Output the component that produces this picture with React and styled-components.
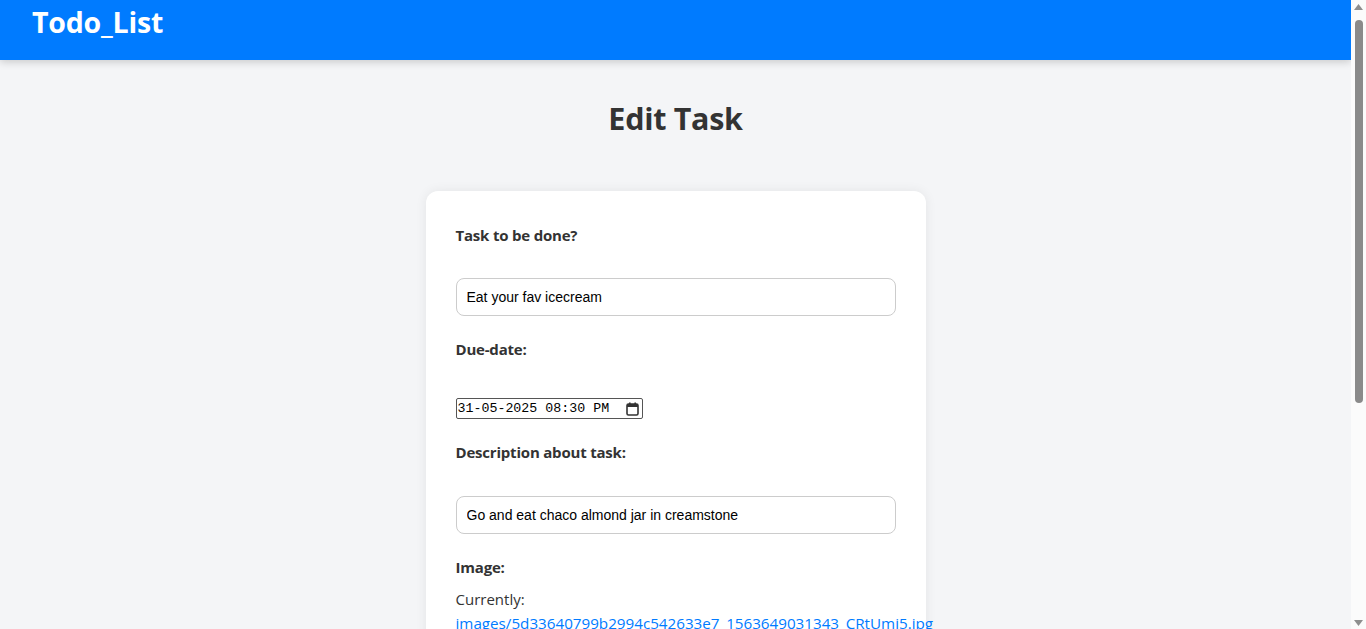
import React from 'react';
import styled, {createGlobalStyle} from 'styled-components';

const GlobalStyle = createGlobalStyle`
  html, body {
    margin: 0;
    padding: 0;
    background: #f4f5f7;
    font-family: "Open Sans", "Noto Sans", sans-serif;
    color: #333;
  }
`;

const Page = styled.div`
  margin-right: 15px;
`;

// stand-in for the browser's classic vertical scrollbar
const ScrollTrack = styled.div`
  position: fixed;
  top: 0;
  right: 0;
  width: 15px;
  height: 100vh;
  background: #fbfbfb;
  display: flex;
  flex-direction: column;
  align-items: center;
  justify-content: space-between;
  padding: 4px 0 3px;
  box-sizing: border-box;
`;

const ScrollThumb = styled.div`
  width: 8px;
  height: 383px;
  margin-top: 10px;
  margin-bottom: auto;
  border-radius: 4px;
  background: #8a8a8a;
`;

const NavBar = styled.header`
  height: 60px;
  background: #007bff;
  padding: 0 32px;
  box-shadow: 0 2px 8px rgba(0, 0, 0, 0.18);
`;

const Brand = styled.h1`
  margin: 0;
  font-size: 28.5px;
  line-height: 44px;
  font-weight: 700;
  color: #fff;
  letter-spacing: -0.2px;
`;

const Main = styled.main`
  padding-bottom: 40px;
`;

const PageTitle = styled.h2`
  margin: 38px 0 53px;
  text-align: center;
  font-size: 30.5px;
  line-height: 40px;
  font-weight: 700;
  color: #333;
  letter-spacing: -0.3px;
`;

const Card = styled.form`
  width: 500px;
  box-sizing: border-box;
  margin: 0 auto;
  background: #fff;
  border-radius: 12px;
  padding: 34px 30px 30px;
  box-shadow: 0 0 12px rgba(0, 0, 0, 0.07);
`;

const Label = styled.label`
  display: block;
  font-size: 15px;
  line-height: 20px;
  font-weight: 700;
  color: #333;
  margin-bottom: ${props => props.gap || 33}px;
  letter-spacing: -0.2px;
`;

const TextInput = styled.input`
  display: block;
  width: 100%;
  box-sizing: border-box;
  padding: 10px;
  border: 1px solid #ccc;
  border-radius: 8px;
  font-family: "Liberation Sans", Arial, sans-serif;
  font-size: 14px;
  line-height: 16px;
  color: #000;
  margin-bottom: 23px;
  outline: none;
`;

const DateBox = styled.div`
  display: flex;
  align-items: center;
  justify-content: space-between;
  width: 187px;
  height: 21px;
  box-sizing: border-box;
  border: 1px solid #555;
  border-radius: 2px;
  padding: 0 3px 0 1px;
  font-family: "Liberation Mono", monospace;
  font-size: 13.3px;
  color: #000;
  margin-bottom: 23px;
`;

const Note = styled.div`
  font-size: 15px;
  line-height: 24px;
  color: #333;
  margin-top: 10px;
`;

const FileLink = styled.a`
  display: block;
  font-size: 15.2px;
  line-height: 24px;
  color: #007bff;
  text-decoration: none;
  white-space: nowrap;
`;

const SubmitButton = styled.button`
  margin-top: 20px;
  width: 100%;
  padding: 10px;
  border: none;
  border-radius: 8px;
  background: #007bff;
  color: #fff;
  font-size: 16px;
  font-family: inherit;
`;

function CalendarIcon() {
  return (
    <svg width="13" height="14" viewBox="0 0 13 14">
      <rect x="1" y="2" width="11" height="11" rx="1.5" fill="none" stroke="#333" strokeWidth="1.6"/>
      <rect x="1" y="2" width="11" height="3" fill="#333"/>
      <rect x="3" y="0.5" width="1.6" height="2.5" fill="#333"/>
      <rect x="8.4" y="0.5" width="1.6" height="2.5" fill="#333"/>
    </svg>
  );
}

function Arrow({down}) {
  return (
    <svg width="9" height="6" viewBox="0 0 9 6">
      <path d={down ? 'M0 0H9L4.5 6Z' : 'M0 6H9L4.5 0Z'} fill="#8e8e8e"/>
    </svg>
  );
}

export default function App() {
  return (
    <Page>
      <GlobalStyle/>
      <NavBar>
        <Brand>Todo_List</Brand>
      </NavBar>
      <Main>
        <PageTitle>Edit Task</PageTitle>
        <Card onSubmit={e => e.preventDefault()}>
          <Label>Task to be done?</Label>
          <TextInput defaultValue="Eat your fav icecream"/>

          <Label gap={39}>Due-date:</Label>
          <DateBox>
            <span>31-05-2025 08:30 PM</span>
            <CalendarIcon/>
          </DateBox>

          <Label gap={34}>Description about task:</Label>
          <TextInput defaultValue="Go and eat chaco almond jar in creamstone"/>

          <Label gap={10}>Image:</Label>
          <Note>Currently:</Note>
          <FileLink href="#">images/5d33640799b2994c542633e7_1563649031343_CRtUmi5.jpg</FileLink>
          <Note>Change: <input type="file"/></Note>

          <SubmitButton type="submit">Update Task</SubmitButton>
        </Card>
      </Main>
      <ScrollTrack>
        <Arrow/>
        <ScrollThumb/>
        <Arrow down/>
      </ScrollTrack>
    </Page>
  );
}
